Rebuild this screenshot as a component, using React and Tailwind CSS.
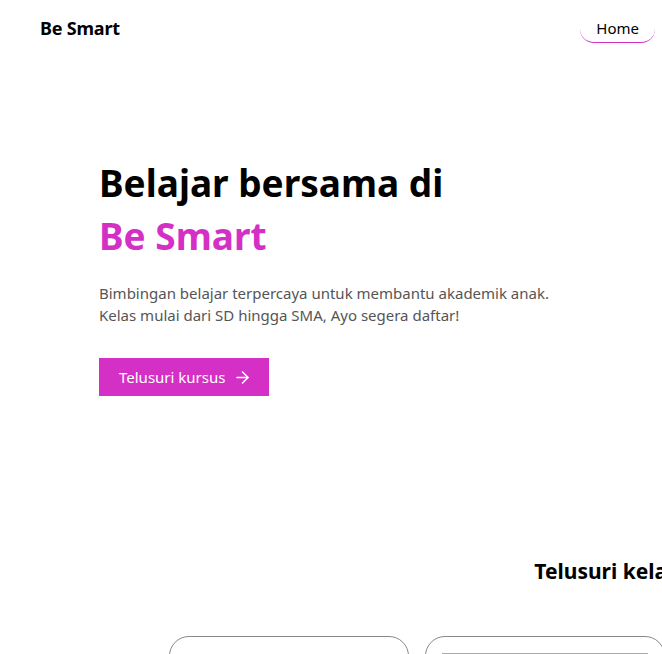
import { ArrowRight } from 'lucide-react';

const courses = [1, 2, 3, 4];

const App = () => {
  return (
    <div className="w-full overflow-hidden bg-white text-black" style={{ fontFamily: '"Noto Sans", "Open Sans", sans-serif' }}>
      {/* Navbar */}
      <nav className="flex items-center justify-between h-[57px] pl-10 pr-[7px]">
        <span className="text-[18px] font-bold tracking-[-0.2px]">Be Smart</span>
        <a href="#" className="px-4 h-[28px] flex items-center rounded-[14px] border-b border-[#d530c5] text-[15px]">
          Home
        </a>
      </nav>

      {/* Hero */}
      <section className="pl-[99px] pt-[99px] pb-[160px]">
        <h1 className="text-[37px] font-bold leading-[53px]">
          Belajar bersama di
          <br />
          <span className="text-[#d530c5]">Be Smart</span>
        </h1>
        <p className="mt-[20px] text-[15px] leading-[22px] text-[#555]">
          Bimbingan belajar terpercaya untuk membantu akademik anak.
          <br />
          Kelas mulai dari SD hingga SMA, Ayo segera daftar!
        </p>
        <button className="mt-[32px] h-[38px] pl-5 pr-[17px] bg-[#d530c5] text-white text-[15px] flex items-center gap-[8px]">
          Telusuri kursus
          <ArrowRight className="w-[19px] h-[19px]" strokeWidth={2} />
        </button>
      </section>

      {/* Kelas */}
      <section className="w-[1212px]">
        <h2 className="text-center text-[21px] font-bold">Telusuri kelas</h2>
        <div className="mt-[48px] pl-[169px] flex gap-4">
          {courses.map((c) => (
            <div key={c} className="w-[240px] h-[320px] rounded-[20px] border border-[#888] px-4 pt-4 shrink-0">
              {c === 2 && <div className="h-[140px] border-t border-[#aaa]" />}
            </div>
          ))}
        </div>
      </section>
    </div>
  );
};

export default App;
